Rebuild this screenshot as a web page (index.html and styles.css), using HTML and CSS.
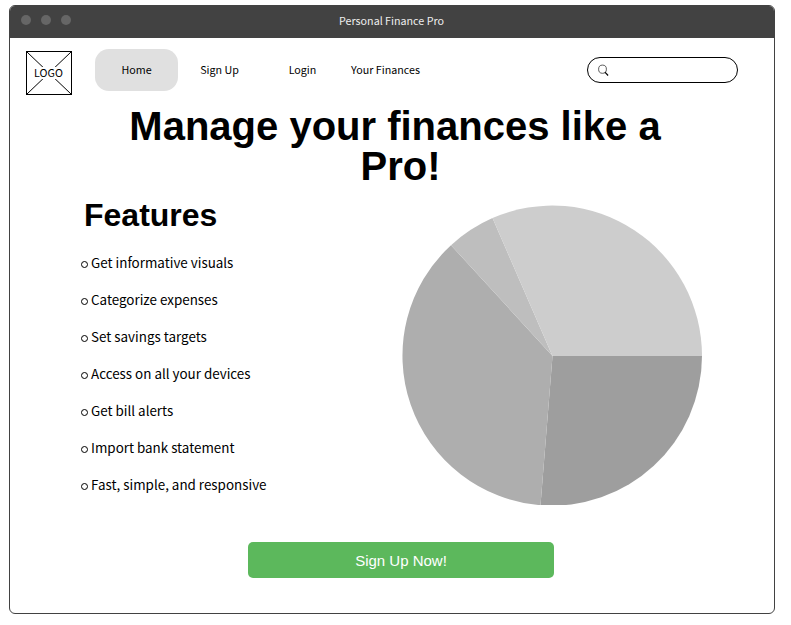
FILE: index.html
```html
<!DOCTYPE html>
<html lang="en">
<head>
<meta charset="utf-8">
<title>Personal Finance Pro</title>
<link rel="stylesheet" href="styles.css">
</head>
<body>
<div class="window">
  <header class="titlebar">
    <div class="dots"><span class="dot"></span><span class="dot"></span><span class="dot"></span></div>
    <div class="title">Personal Finance Pro</div>
  </header>
  <nav class="nav">
    <div class="logo">
      <svg class="logo-cross" viewBox="0 0 44 42" width="44" height="42"><path d="M0 0L44 42M44 0L0 42" stroke="#000" fill="none"/></svg>
      <span class="logo-text">LOGO</span>
    </div>
    <a class="tab active">Home</a>
    <a class="tab">Sign Up</a>
    <a class="tab">Login</a>
    <a class="tab">Your Finances</a>
    <div class="search">
      <svg width="12" height="12" viewBox="0 0 12 12"><ellipse cx="4.5" cy="5.2" rx="3.9" ry="4.1" fill="none" stroke="#333" stroke-width=".8"/><path d="M6.9 8.2L10.1 11.5" stroke="#000" stroke-width="1.2"/></svg>
    </div>
  </nav>
  <h1 class="headline">Manage your finances like a <span class="last">Pro!</span></h1>
  <main class="content">
    <section class="features">
      <h2 class="features-title">Features</h2>
      <ul class="list">
        <li>Get informative visuals</li>
        <li>Categorize expenses</li>
        <li>Set savings targets</li>
        <li>Access on all your devices</li>
        <li>Get bill alerts</li>
        <li>Import bank statement</li>
        <li>Fast, simple, and responsive</li>
      </ul>
    </section>
    <svg class="pie" width="300" height="300" viewBox="0 0 300 300">
      <path fill="#9e9e9e" d="M150.5 151H300A150 150 0 0 1 138.5 300.2Z"/>
      <path fill="#aeaeae" d="M150.5 151L138.5 300.2A150 150 0 0 1 49 40.2Z"/>
      <path fill="#bebebe" d="M150.5 151L49 40.2A150 150 0 0 1 90.5 13Z"/>
      <path fill="#cdcdcd" d="M150.5 151L90.5 13A149.8 150.5 0 0 1 300 151Z"/>
    </svg>
  </main>
  <button class="signup">Sign Up Now!</button>
</div>
</body>
</html>
```
FILE: styles.css
```css
*, *::before { box-sizing: border-box; }
body {
  margin: 0;
  background: #fff;
  color: #000;
  font-family: "Noto Sans CJK SC", "Noto Sans", sans-serif;
}
.window {
  width: 766px;
  height: 609px;
  margin: 5px 0 0 9px;
  border: 1px solid #424242;
  border-radius: 6px;
  overflow: hidden;
}
.titlebar {
  height: 32px;
  background: #424242;
  display: grid;
  grid-template-columns: 100px 1fr 101px;
}
.dots { display: flex; gap: 10px; padding: 9px 0 0 10.5px; }
.dot { width: 10px; height: 10px; border-radius: 50%; background: #666; }
.title { color: #eee; font-size: 10.72px; line-height: 30px; text-align: center; }
.nav { display: flex; height: 62px; padding: 11px 36px 0 16px; font-size: 10.72px; }
.logo {
  display: grid;
  place-items: center;
  width: 46px;
  height: 44px;
  margin: 2px 23px 0 0;
  border: 1px solid #000;
}
.logo-cross, .logo-text { grid-area: 1 / 1; }
.logo-text { margin-right: 1px; background: #fff; line-height: 12px; }
.tab { width: 83px; height: 42px; line-height: 42px; text-align: center; border-radius: 14px; }
.active { background: #e0e0e0; }
.search {
  width: 151px;
  height: 26px;
  margin: 8px 0 0 auto;
  padding: 6px 0 0 10px;
  border: 1px solid #000;
  border-radius: 13px;
}
.search svg { display: block; }
.headline {
  width: 560px;
  margin: 6px 0 0 105px;
  font: bold 40px/40px "Liberation Sans", sans-serif;
  text-align: center;
}
.last { padding-left: 11px; }
.content { display: flex; height: 320px; padding-left: 71px; }
.features { width: 321px; padding-top: 11px; }
.features-title { margin: 0 0 11px 3px; font: bold 32px/36px "Liberation Sans", sans-serif; }
.list { margin: 0; padding: 0; list-style: none; font-size: 13.4px; line-height: 37px; }
.list li { display: flex; align-items: center; gap: 3px; height: 37px; }
.list li::before {
  content: "";
  width: 7px;
  height: 7px;
  margin-top: 4px;
  border: 1px solid #000;
  border-radius: 50%;
}
.pie { margin-top: 19px; }
.signup {
  display: block;
  width: 306px;
  height: 36px;
  margin: 36px 0 0 238px;
  padding: 1px 0 0;
  border: 0;
  border-radius: 5px;
  background: #5cb85c;
  color: #fff;
  font: 15px "Liberation Sans", sans-serif;
}
```
